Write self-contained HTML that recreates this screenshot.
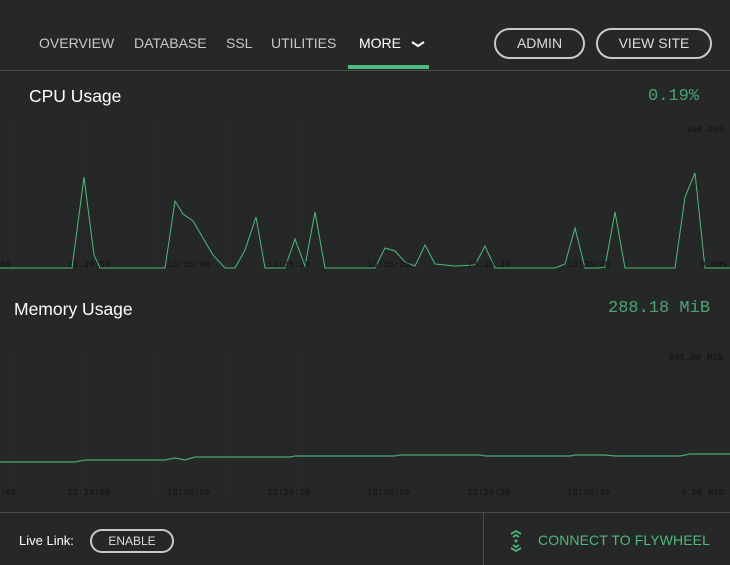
<!DOCTYPE html><html><head><style>
*{margin:0;padding:0;box-sizing:border-box}
body{width:730px;height:565px;background:#262727;font-family:"Liberation Sans",sans-serif;position:relative;overflow:hidden;color:#fff}
.n{position:absolute;top:35px;font-size:14px;color:#c8c8c8;letter-spacing:0}
.btn{position:absolute;border:2px solid #c9c9c9;border-radius:16px;color:#ddd;font-size:14px;text-align:center}
.t{position:absolute;font-family:"Liberation Mono",monospace;font-size:9px;color:#111}
.h{position:absolute;font-size:17.5px;color:#fff}
.v{position:absolute;font-family:"Liberation Mono",monospace;font-size:17px;color:#4aa573}
</style></head><body>
<div class="n" style="left:39px">OVERVIEW</div>
<div class="n" style="left:134px">DATABASE</div>
<div class="n" style="left:226px">SSL</div>
<div class="n" style="left:271px">UTILITIES</div>
<div class="n" style="left:359px;color:#fff">MORE</div>
<svg style="position:absolute;left:410px;top:40px" width="16" height="8"><path d="M2 2 L8 6 L14 2" stroke="#fff" stroke-width="2" fill="none"/></svg>
<div style="position:absolute;left:348px;top:65px;width:81px;height:4px;background:#4cbb7b"></div>
<div style="position:absolute;left:0;top:70px;width:730px;height:1px;background:#4a4a4a"></div>
<div class="btn" style="left:494px;top:28px;width:91px;height:31px;line-height:27px">ADMIN</div>
<div class="btn" style="left:596px;top:28px;width:116px;height:31px;line-height:27px">VIEW SITE</div>
<div class="h" style="left:29px;top:86px">CPU Usage</div>
<div class="v" style="left:648px;top:87px">0.19%</div>
<div class="h" style="left:14px;top:299px">Memory Usage</div>
<div class="v" style="left:608px;top:299px">288.18 MiB</div>
<svg style="position:absolute;left:0;top:0" width="730" height="512">
<g stroke="#292a2a" stroke-width="1">
<line x1="10.5" y1="120" x2="10.5" y2="268"/><line x1="81.5" y1="120" x2="81.5" y2="268"/><line x1="153.5" y1="120" x2="153.5" y2="268"/><line x1="225.5" y1="120" x2="225.5" y2="268"/><line x1="297.5" y1="120" x2="297.5" y2="268"/>
<line x1="10.5" y1="350" x2="10.5" y2="492"/><line x1="81.5" y1="350" x2="81.5" y2="492"/><line x1="153.5" y1="350" x2="153.5" y2="492"/><line x1="225.5" y1="350" x2="225.5" y2="492"/><line x1="297.5" y1="350" x2="297.5" y2="492"/>
</g>
<polyline fill="none" stroke="#4cbb7b" stroke-width="1" points="0,268 72,268 84,177 94,255 100,268 165,268 175,201 183,214 193,221 213,255 225,268 235,268 245,250 256,217 265,268 285,268 295,239 305,266 315,212 325,268 345,268 375,268 385,248 395,251 405,262 415,266 425,245 435,264 455,266 475,265 485,246 495,268 555,268 565,264 575,228 585,268 600,268 605,267 615,212 625,268 640,268 675,268 685,197 695,173 705,268 730,268"/>
<polyline fill="none" stroke="#4aa573" stroke-width="1.3" points="0,462 75,462 85,460 165,460 175,458 185,460 195,457 290,457 295,456 395,456 400,455 480,455 485,456 570,456 575,455 605,455 615,456 680,456 690,454 730,454"/>
</svg>
<div class="t" style="left:0;top:260px">40</div>
<div class="t" style="left:67px;top:260px">13:34:50</div>
<div class="t" style="left:167px;top:260px">13:35:00</div>
<div class="t" style="left:267px;top:260px">13:35:10</div>
<div class="t" style="left:367px;top:260px">13:35:20</div>
<div class="t" style="left:467px;top:260px">13:35:30</div>
<div class="t" style="left:567px;top:260px">13:35:40</div>
<div class="t" style="left:700px;top:260px">0.00%</div>
<div class="t" style="left:686px;top:125px">100.00%</div>
<div class="t" style="left:669px;top:353px">995.00 MiB</div>
<div class="t" style="left:0;top:488px">:40</div>
<div class="t" style="left:67px;top:488px">13:34:50</div>
<div class="t" style="left:167px;top:488px">13:35:00</div>
<div class="t" style="left:267px;top:488px">13:35:10</div>
<div class="t" style="left:367px;top:488px">13:35:20</div>
<div class="t" style="left:467px;top:488px">13:35:30</div>
<div class="t" style="left:567px;top:488px">13:35:40</div>
<div class="t" style="left:681px;top:488px">0.00 MiB</div>
<div style="position:absolute;left:0;top:512px;width:730px;height:1px;background:#4a4a4a"></div>
<div style="position:absolute;left:483px;top:513px;width:1px;height:52px;background:#4a4a4a"></div>
<div style="position:absolute;left:19px;top:533px;font-size:13px;color:#fff">Live Link:</div>
<div class="btn" style="left:90px;top:529px;width:84px;height:24px;line-height:20px;font-size:12px;border-radius:12px">ENABLE</div>
<svg style="position:absolute;left:508px;top:529px" width="16" height="24"><path d="M3 5 L8 2 L13 5 M5 8 L8 6 L11 8 M3 19 L8 22 L13 19 M5 16 L8 18 L11 16" stroke="#4cbb7b" stroke-width="1.8" fill="none"/><circle cx="8" cy="12" r="1.5" fill="#4cbb7b"/></svg>
<div style="position:absolute;left:538px;top:532px;font-size:14px;color:#4cbb7b;letter-spacing:0.1px">CONNECT TO FLYWHEEL</div>
</body></html>
